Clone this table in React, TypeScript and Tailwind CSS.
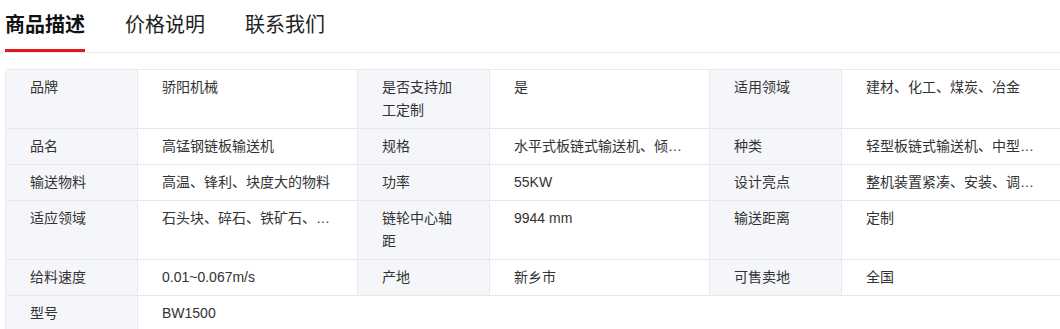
import React from "react";

type Cell = { label: string; value: string };

const rows: Cell[][] = [
  [
    { label: "品牌", value: "骄阳机械" },
    { label: "是否支持加工定制", value: "是" },
    { label: "适用领域", value: "建材、化工、煤炭、冶金" },
  ],
  [
    { label: "品名", value: "高锰钢链板输送机" },
    { label: "规格", value: "水平式板链式输送机、倾斜式板链式输送机" },
    { label: "种类", value: "轻型板链式输送机、中型板链式输送机、重型板链式输送机" },
  ],
  [
    { label: "输送物料", value: "高温、锋利、块度大的物料" },
    { label: "功率", value: "55KW" },
    { label: "设计亮点", value: "整机装置紧凑、安装、调试、维修方便" },
  ],
  [
    { label: "适应领域", value: "石头块、碎石、铁矿石、煤块、熟料等" },
    { label: "链轮中心轴距", value: "9944 mm" },
    { label: "输送距离", value: "定制" },
  ],
  [
    { label: "给料速度", value: "0.01~0.067m/s" },
    { label: "产地", value: "新乡市" },
    { label: "可售卖地", value: "全国" },
  ],
];

const font = {
  fontFamily: '"Liberation Sans", "Noto Sans CJK SC", sans-serif',
};

export default function App() {
  return (
    <div className="w-[1060px] h-[329px] overflow-hidden bg-white" style={font}>
      <div className="flex gap-10 pl-[5px] border-b border-[#ececec] h-[53px]">
        <div className="h-[52px] box-border pt-[11px] border-b-[3px] border-[#e5161d] text-[20px] leading-[28px] font-bold text-[#111]">
          商品描述
        </div>
        <div className="h-[52px] pt-[11px] text-[20px] leading-[28px] text-[#222]">价格说明</div>
        <div className="h-[52px] pt-[11px] text-[20px] leading-[28px] text-[#222]">联系我们</div>
      </div>
      <div className="mt-4 ml-[5px] w-[1058px] border-l border-t border-[#e9e9ec] rounded-tl-[3px] grid grid-cols-[132px_220px_132px_220px_132px_221px] text-[14px] leading-[23px] text-[#333]">
        {rows.map((row, ri) =>
          row.map((c, ci) => (
            <React.Fragment key={`${ri}-${ci}`}>
              <div className="bg-[#f5f6f9] border-r border-b border-[#e9e9ec] px-[24px] py-[6px]">
                {c.label}
              </div>
              <div className="border-r border-b border-[#e9e9ec] px-[24px] py-[6px] min-w-0 truncate">
                {c.value}
              </div>
            </React.Fragment>
          ))
        )}
        <div className="bg-[#f5f6f9] border-r border-b border-[#e9e9ec] px-[24px] py-[6px]">型号</div>
        <div className="col-span-5 border-b border-[#e9e9ec] px-[24px] py-[6px]">BW1500</div>
      </div>
    </div>
  );
}
